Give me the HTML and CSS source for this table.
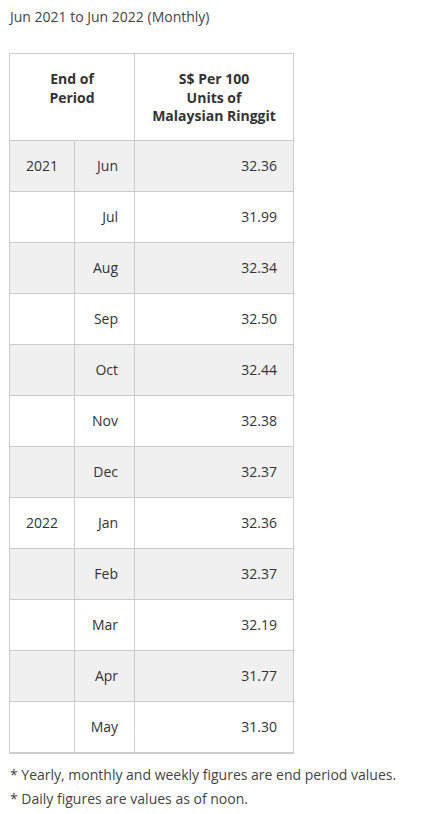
FILE: index.html
```html
<!DOCTYPE html>
<html lang="en">
<head>
<meta charset="utf-8">
<title>Exchange Rates</title>
<link rel="stylesheet" href="styles.css">
</head>
<body>
<div class="page">
  <p class="title">Jun 2021 to Jun 2022 (Monthly)</p>
  <table class="rates">
    <colgroup>
      <col class="c-year">
      <col class="c-month">
      <col class="c-value">
    </colgroup>
    <thead>
      <tr>
        <th colspan="2">End of<br>Period</th>
        <th>S$ Per 100<br>Units of<br>Malaysian Ringgit</th>
      </tr>
    </thead>
    <tbody>
      <tr class="odd"><td class="year">2021</td><td class="month">Jun</td><td class="val">32.36</td></tr>
      <tr><td class="year"></td><td class="month">Jul</td><td class="val">31.99</td></tr>
      <tr class="odd"><td class="year"></td><td class="month">Aug</td><td class="val">32.34</td></tr>
      <tr><td class="year"></td><td class="month">Sep</td><td class="val">32.50</td></tr>
      <tr class="odd"><td class="year"></td><td class="month">Oct</td><td class="val">32.44</td></tr>
      <tr><td class="year"></td><td class="month">Nov</td><td class="val">32.38</td></tr>
      <tr class="odd"><td class="year"></td><td class="month">Dec</td><td class="val">32.37</td></tr>
      <tr><td class="year">2022</td><td class="month">Jan</td><td class="val">32.36</td></tr>
      <tr class="odd"><td class="year"></td><td class="month">Feb</td><td class="val">32.37</td></tr>
      <tr><td class="year"></td><td class="month">Mar</td><td class="val">32.19</td></tr>
      <tr class="odd"><td class="year"></td><td class="month">Apr</td><td class="val">31.77</td></tr>
      <tr><td class="year"></td><td class="month">May</td><td class="val">31.30</td></tr>
    </tbody>
  </table>
  <div class="notes">
    <p class="note">* Yearly, monthly and weekly figures are end period values.</p>
    <p class="note">* Daily figures are values as of noon.</p>
  </div>
</div>
</body>
</html>
```
FILE: styles.css
```css
html, body {
  margin: 0;
  padding: 0;
  background: #ffffff;
}

body {
  font-family: "Open Sans", "Noto Sans", sans-serif;
  font-size: 14px;
  color: #333333;
}

.page {
  padding: 5px 9px 0 9px;
}

.title {
  margin: 0 0 24px 1px;
  line-height: 24px;
  color: #444444;
}

.rates {
  border-collapse: collapse;
  table-layout: fixed;
  width: 284px;
  border-bottom: 2px solid #cccccc;
}

.c-year { width: 65px; }
.c-month { width: 60px; }
.c-value { width: 159px; }

.rates th,
.rates td {
  border: 1px solid #cccccc;
}

.rates th {
  font-weight: 700;
  line-height: 18.5px;
  padding: 16px 14px 14px;
  text-align: center;
  vertical-align: top;
  color: #333333;
}

.rates td {
  height: 24px;
  line-height: 24px;
  padding: 13px 16px 13px 8px;
  text-align: right;
  vertical-align: middle;
}

.rates tr.odd td {
  background: #f0f0f0;
}

.notes {
  padding-top: 9px;
}

.note {
  margin: 0 0 0 1px;
  line-height: 24px;
  color: #444444;
}
```
